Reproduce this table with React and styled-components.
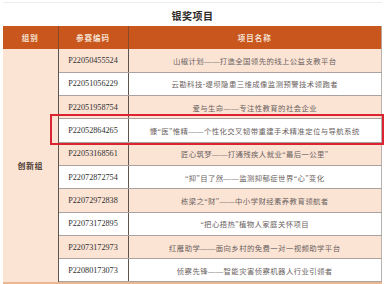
import React from "react";
import styled, { createGlobalStyle } from "styled-components";

const rows = [
  ["P22050455524", "山椒计划——打造全国领先的线上公益支教平台"],
  ["P22051056229", "云勘科技-堤坝隐患三维成像监测预警技术领跑者"],
  ["P22051958754", "爱与生命——专注性教育的社会企业"],
  ["P22052864265", "慷“医”惟精——个性化交叉韧带重建手术精准定位与导航系统"],
  ["P22053168561", "匠心筑梦——打通残疾人就业“最后一公里”"],
  ["P22072872754", "“抑”目了然——监测抑郁症世界“心”变化"],
  ["P22072972838", "栋梁之“财”——中小学财经素养教育领航者"],
  ["P22073172895", "“把心捂热”植物人家庭关怀项目"],
  ["P22073172973", "红雁助学——面向乡村的免费一对一视频助学平台"],
  ["P22080173073", "侦察先锋——智能灾害侦察机器人行业引领者"],
];

export default function App() {
  return (
    <>
      <GlobalStyle />
      <Page>
        <Title>银奖项目</Title>
        <Table>
          <colgroup>
            <col style={{ width: 55 }} />
            <col style={{ width: 70 }} />
            <col />
          </colgroup>
          <thead>
            <tr>
              <HeadCell>组别</HeadCell>
              <HeadCell>参赛编码</HeadCell>
              <HeadCell $last>项目名称</HeadCell>
            </tr>
          </thead>
          <tbody>
            {rows.map(([code, name], i) => (
              <Row key={code} $tinted={i % 2 === 0}>
                {i === 0 && <GroupCell rowSpan={rows.length}>创新组</GroupCell>}
                <CodeCell>{code}</CodeCell>
                <NameCell>{name}</NameCell>
              </Row>
            ))}
          </tbody>
        </Table>
        <NextStrip />
        <Highlight />
      </Page>
    </>
  );
}

const GlobalStyle = createGlobalStyle`
  body {
    margin: 0;
    background: #ffffff;
  }
`;

const Page = styled.div`
  position: relative;
  width: 379px;
  margin-left: 3px;
  border-top: 1px solid #f0ecea;
  margin-top: 2px;
`;

const Title = styled.div`
  height: 21px;
  display: flex;
  align-items: center;
  justify-content: center;
  padding-top: 2px;
  font-family: "Noto Sans CJK SC", sans-serif;
  font-weight: 700;
  font-size: 10px;
  letter-spacing: 0.5px;
  color: #2e2a28;
`;

const Table = styled.table`
  width: 100%;
  border-collapse: collapse;
  table-layout: fixed;
`;

const HeadCell = styled.th`
  height: 23px;
  padding: 0;
  background: #c8561d;
  color: #f6e2d4;
  font-family: "Noto Sans CJK SC", sans-serif;
  font-weight: 700;
  font-size: 7.5px;
  letter-spacing: 1px;
  border-right: 1px solid ${(p) => (p.$last ? "#b9a79c" : "#8a4a2a")};
`;

const Row = styled.tr`
  height: 23.3px;
  background: ${(p) => (p.$tinted ? "#fce4d5" : "#ffffff")};
`;

const GroupCell = styled.td`
  padding: 0;
  background: #fce4d5;
  text-align: center;
  vertical-align: middle;
  font-family: "Noto Sans CJK SC", sans-serif;
  font-weight: 700;
  font-size: 8px;
  letter-spacing: 0.5px;
  color: #4a3a32;
  border-right: 1px solid #5e5550;
`;

const CodeCell = styled.td`
  padding: 0;
  text-align: center;
  font-family: "Liberation Serif", serif;
  font-size: 8.2px;
  color: #2f2f2f;
  border-right: 1px solid #5e5550;
  border-bottom: 1px solid #a9a29e;
`;

const NameCell = styled.td`
  padding: 0;
  text-align: center;
  font-family: "Liberation Serif", "Noto Sans CJK SC", serif;
  font-size: 7.4px;
  letter-spacing: 0.4px;
  color: #6a625e;
  border-right: 1px solid #b9b3b0;
  border-bottom: 1px solid #a9a29e;
`;

const NextStrip = styled.div`
  height: 3px;
  background: #ebb792;
`;

const Highlight = styled.div`
  position: absolute;
  left: 47px;
  top: 111px;
  width: 330px;
  height: 27px;
  border: 2px solid #dc2330;
  pointer-events: none;
`;
